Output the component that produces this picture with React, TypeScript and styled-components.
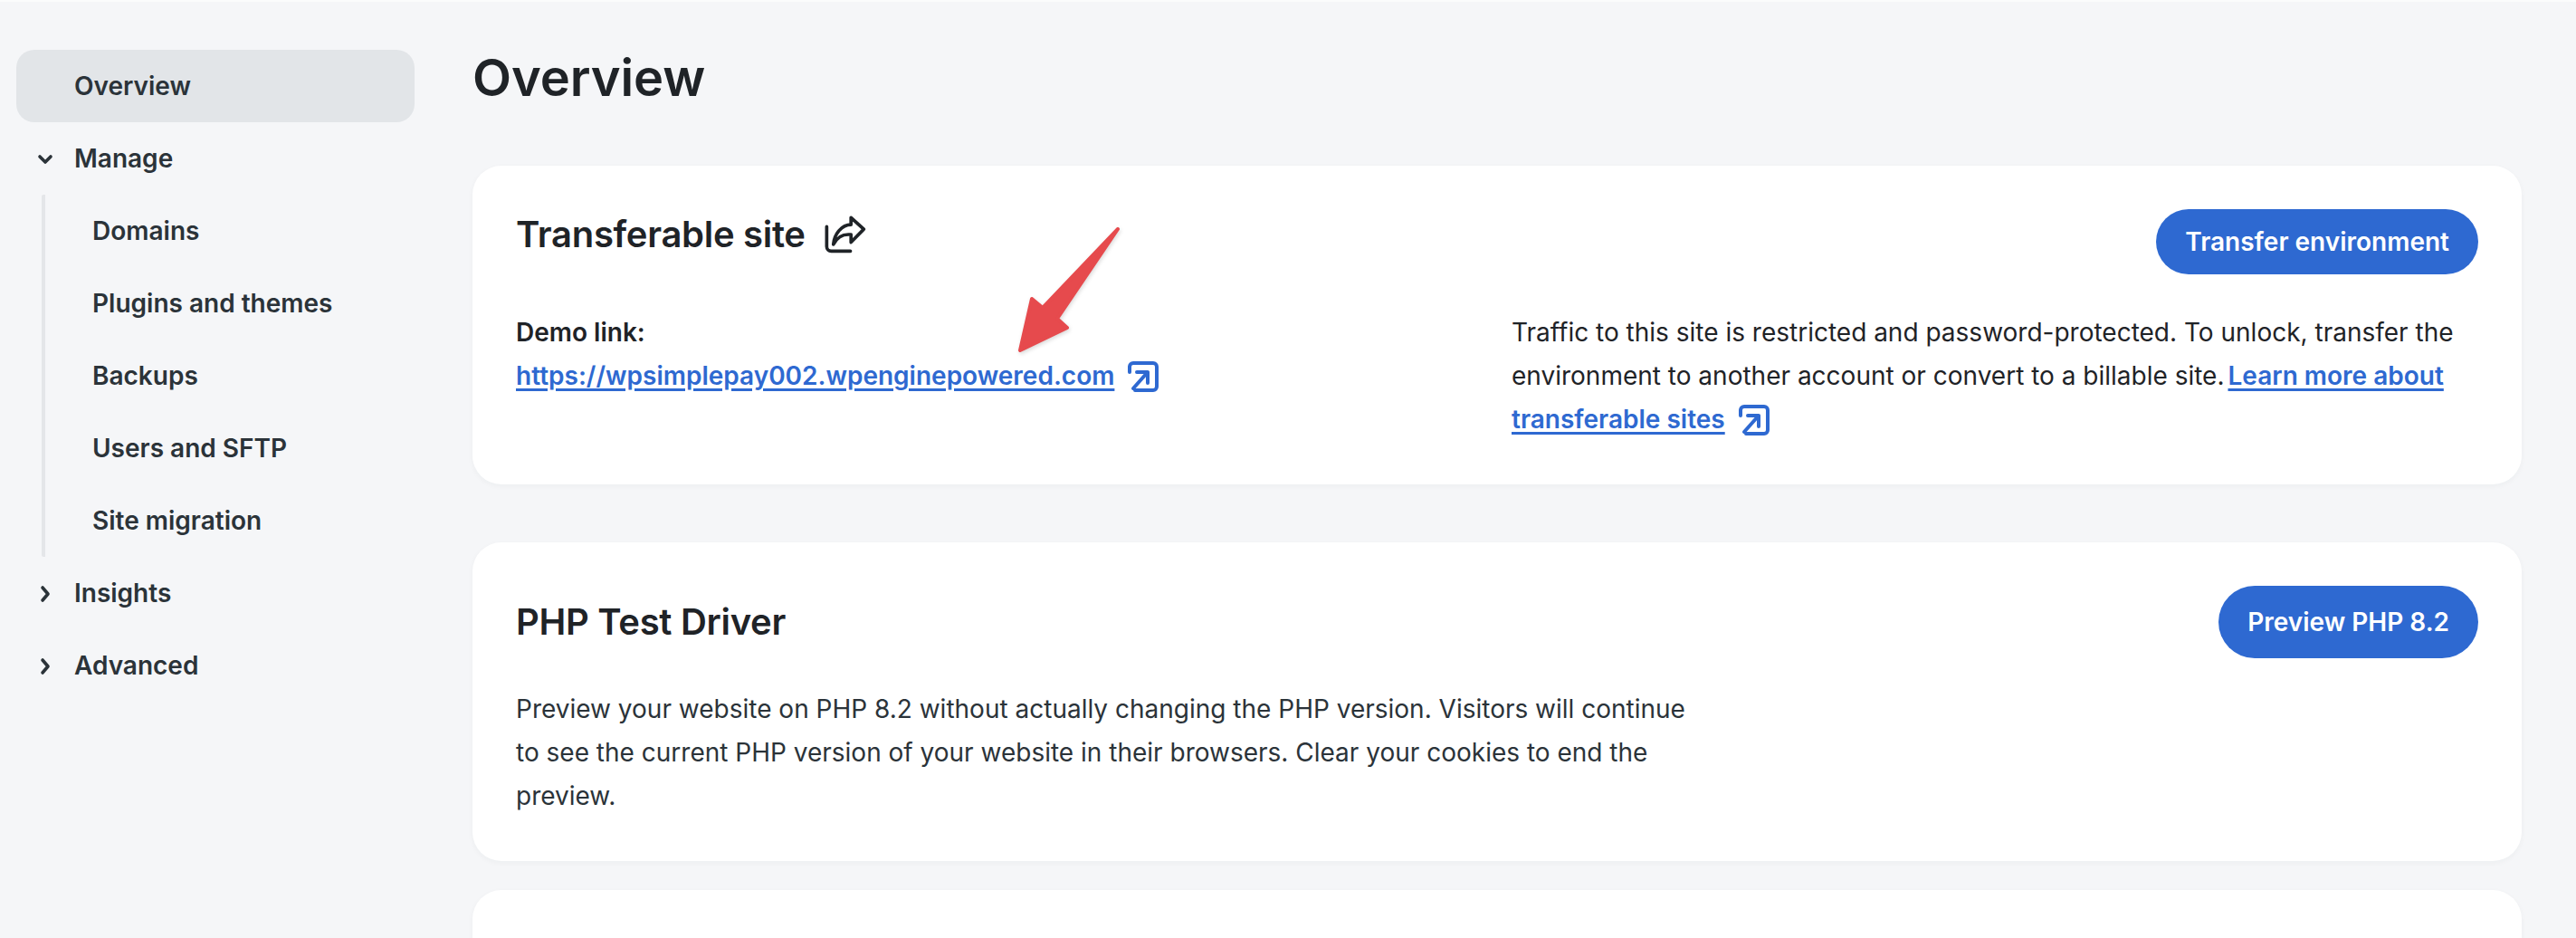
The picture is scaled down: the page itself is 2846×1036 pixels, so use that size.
import React from 'react'
import styled, { createGlobalStyle } from 'styled-components'

const GlobalStyle = createGlobalStyle`
  html, body {
    margin: 0;
    padding: 0;
    height: 100%;
    background-color: #f5f6f8;
    overflow: hidden;
  }
  * {
    box-sizing: border-box;
  }
`

const Page = styled.div`
  display: flex;
  height: 1036px;
  border-top: 2px solid #fbfcfc;
  background-color: #f5f6f8;
  font-family: Inter, "Liberation Sans", sans-serif;
  font-size: 28px;
  line-height: 48px;
  color: #1f2327;
  overflow: hidden;
`

const Sidebar = styled.nav`
  flex: 0 0 440px;
  margin-left: 18px;
  padding-top: 53px;
  display: flex;
  flex-direction: column;
`

const NavRow = styled.div<{ $active?: boolean }>`
  display: flex;
  flex: none;
  align-items: center;
  height: 80px;
  padding-left: 64px;
  position: relative;
  border-radius: 20px;
  font-weight: 600;
  color: #2b3339;
  background-color: ${({ $active }) => ($active ? '#e2e5e8' : 'transparent')};
`

const NavChevron = styled.svg`
  position: absolute;
  left: 22px;
  top: 31px;
  width: 20px;
  height: 20px;
  fill: none;
  stroke: #2b3339;
  stroke-width: 3.6;
  stroke-linecap: round;
  stroke-linejoin: round;
`

const SubNav = styled.div`
  margin-left: 28px;
  border-left: 4px solid #e4e6e9;
  border-radius: 2px;
  display: flex;
  flex: none;
  flex-direction: column;
`

const SubNavRow = styled.div`
  display: flex;
  align-items: center;
  height: 80px;
  padding-left: 52px;
  font-weight: 600;
  color: #2b3339;
`

const Main = styled.main`
  flex: 0 0 2264px;
  margin-left: 64px;
  display: flex;
  flex-direction: column;
`

const PageTitle = styled.h1`
  flex: none;
  margin: 0;
  height: 181px;
  padding-top: 50px;
  font-size: 56px;
  line-height: 68px;
  font-weight: 600;
  letter-spacing: -0.1px;
  color: #1f2327;
`

const Card = styled.section<{ $gap: number }>`
  position: relative;
  flex: none;
  background-color: #fff;
  border-radius: 32px;
  padding: 48px;
  margin-bottom: ${({ $gap }) => $gap}px;
  box-shadow: 0 2px 6px rgba(30, 40, 50, 0.04);
`

const EmptyCard = styled(Card)`
  min-height: 176px;
`

const CardHeader = styled.div<{ $center?: boolean }>`
  display: flex;
  justify-content: space-between;
  align-items: ${({ $center }) => ($center ? 'center' : 'flex-start')};
`

const CardTitle = styled.h2`
  display: flex;
  align-items: center;
  gap: 20px;
  margin: 0;
  font-size: 40px;
  line-height: 56px;
  font-weight: 600;
  letter-spacing: -0.3px;
  color: #1f2327;
`

const Button = styled.button<{ $tall?: boolean }>`
  flex: none;
  height: ${({ $tall }) => ($tall ? 80 : 72)}px;
  padding: 0 32px;
  border: none;
  border-radius: 40px;
  background-color: #2e69d1;
  color: #fff;
  font-family: inherit;
  font-size: 28px;
  font-weight: 600;
`

const Columns = styled.div`
  display: grid;
  grid-template-columns: 1fr 1fr;
  gap: 32px;
  margin-top: 40px;
`

const Label = styled.div`
  font-weight: 600;
`

const TextLink = styled.a`
  color: #2e69d1;
  font-weight: 600;
  text-decoration: underline;
  text-decoration-thickness: 3px;
  text-underline-offset: 4px;
`

const Lead = styled(TextLink)`
  margin-left: 4px;
`

const LinkIcon = styled.svg`
  display: inline-block;
  width: 36px;
  height: 36px;
  margin-left: 14px;
  vertical-align: -9px;
  fill: none;
  stroke: #2e69d1;
  stroke-width: 4;
  stroke-linecap: round;
  stroke-linejoin: round;
`

const ShareIcon = styled.svg`
  width: 47px;
  height: 42px;
  fill: none;
  stroke: #1f2327;
  stroke-width: 11;
  stroke-linecap: round;
  stroke-linejoin: round;
`

const Body = styled.p`
  margin: 32px 0 0;
  max-width: 1320px;
  color: #2b3339;
`

const Annotation = styled.svg`
  position: absolute;
  left: 590px;
  top: 60px;
  width: 130px;
  height: 150px;
  overflow: visible;
  filter: drop-shadow(1px 2px 2px rgba(0, 0, 0, 0.15));
`

const ExternalIcon = () => (
  <LinkIcon viewBox="0 0 36 36">
    <path d="M3 13V7a4 4 0 0 1 4-4h22a4 4 0 0 1 4 4v22a4 4 0 0 1-4 4H9" />
    <path d="M7 31 23 13M11 13h12v12" />
  </LinkIcon>
)

const subItems = ['Domains', 'Plugins and themes', 'Backups', 'Users and SFTP', 'Site migration']

export default function App() {
  return (
    <Page>
      <GlobalStyle />
      <Sidebar>
        <NavRow $active>Overview</NavRow>
        <NavRow>
          <NavChevron viewBox="0 0 20 20"><path d="M4 7l6 6 6-6" /></NavChevron>
          Manage
        </NavRow>
        <SubNav>
          {subItems.map((item) => <SubNavRow key={item}>{item}</SubNavRow>)}
        </SubNav>
        <NavRow>
          <NavChevron viewBox="0 0 20 20"><path d="M7 3l6 7-6 7" /></NavChevron>
          Insights
        </NavRow>
        <NavRow>
          <NavChevron viewBox="0 0 20 20"><path d="M7 3l6 7-6 7" /></NavChevron>
          Advanced
        </NavRow>
      </Sidebar>
      <Main>
        <PageTitle>Overview</PageTitle>
        <Card $gap={64}>
          <CardHeader>
            <CardTitle>
              Transferable site
              <ShareIcon viewBox="90 55 140 125">
                <path d="M100 92v65a15 15 0 0 0 15 15h63" />
                <path d="M122 150c3-35 28-65 58-65V62l42 38-42 43v-25c-25-3-45 7-58 32z" />
              </ShareIcon>
            </CardTitle>
            <Button>Transfer environment</Button>
          </CardHeader>
          <Columns>
            <div>
              <Label>Demo link:</Label>
              <TextLink>https://wpsimplepay002.wpenginepowered.com</TextLink>
              <ExternalIcon />
            </div>
            <div>
              Traffic to this site is restricted and password-protected. To unlock, transfer the
              environment to another account or convert to a billable site.<Lead>Learn more about transferable sites</Lead>
              <ExternalIcon />
            </div>
          </Columns>
          <Annotation viewBox="0 0 130 150">
            <path
              d="M123 10 L56 109 L67 119 L15 144 L28 87 L40 97 Z"
              fill="#e64a4d"
              stroke="#e64a4d"
              strokeWidth="4"
              strokeLinejoin="round"
            />
          </Annotation>
        </Card>
        <Card $gap={32}>
          <CardHeader $center>
            <CardTitle>PHP Test Driver</CardTitle>
            <Button $tall>Preview PHP 8.2</Button>
          </CardHeader>
          <Body>
            Preview your website on PHP 8.2 without actually changing the PHP version. Visitors will continue
            to see the current PHP version of your website in their browsers. Clear your cookies to end the
            preview.
          </Body>
        </Card>
        <EmptyCard $gap={0} />
      </Main>
    </Page>
  )
}
